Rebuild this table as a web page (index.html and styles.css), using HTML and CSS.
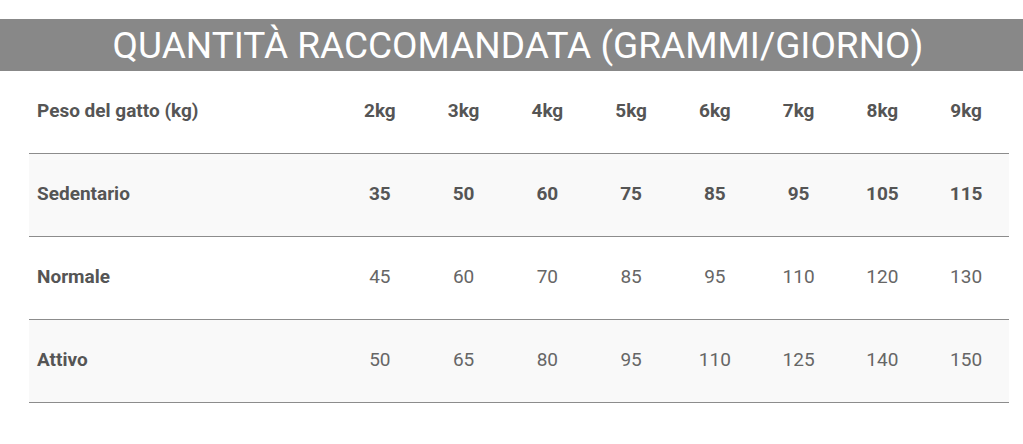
FILE: index.html
```html
<!DOCTYPE html>
<html lang="it">
<head>
<meta charset="utf-8">
<title>Quantità raccomandata</title>
<link rel="stylesheet" href="styles.css">
</head>
<body>
<div class="page">
  <h2 class="title">QUANTITÀ RACCOMANDATA (GRAMMI/GIORNO)</h2>
  <table class="dose">
    <tbody>
      <tr class="row row-head">
        <th class="label">Peso del gatto (kg)</th>
        <td class="num strong">2kg</td><td class="num strong">3kg</td><td class="num strong">4kg</td><td class="num strong">5kg</td>
        <td class="num strong">6kg</td><td class="num strong">7kg</td><td class="num strong">8kg</td><td class="num strong">9kg</td>
      </tr>
      <tr class="row row-alt">
        <th class="label">Sedentario</th>
        <td class="num strong">35</td><td class="num strong">50</td><td class="num strong">60</td><td class="num strong">75</td>
        <td class="num strong">85</td><td class="num strong">95</td><td class="num strong">105</td><td class="num strong">115</td>
      </tr>
      <tr class="row">
        <th class="label">Normale</th>
        <td class="num">45</td><td class="num">60</td><td class="num">70</td><td class="num">85</td>
        <td class="num">95</td><td class="num">110</td><td class="num">120</td><td class="num">130</td>
      </tr>
      <tr class="row row-alt">
        <th class="label">Attivo</th>
        <td class="num">50</td><td class="num">65</td><td class="num">80</td><td class="num">95</td>
        <td class="num">110</td><td class="num">125</td><td class="num">140</td><td class="num">150</td>
      </tr>
    </tbody>
  </table>
</div>
</body>
</html>
```
FILE: styles.css
```css
html, body {
  margin: 0;
  padding: 0;
  background: #ffffff;
}
body {
  font-family: Roboto, "Liberation Sans", Arial, sans-serif;
  color: #555555;
}
.page {
  padding-top: 19px;
}
.title {
  margin: 0;
  height: 52px;
  padding-left: 13px;
  background: #888888;
  color: #ffffff;
  font-weight: 400;
  font-size: 37px;
  line-height: 54px;
  text-align: center;
  letter-spacing: 0;
}
.dose {
  margin: 0 14px 0 29px;
  width: 980px;
  border-collapse: collapse;
  table-layout: fixed;
}
.row {
  height: 83px;
}
.row-head {
  height: 82px;
  background: #ffffff;
}
.row-alt {
  background: #f9f9f9;
}
.label, .num {
  border-bottom: 1px solid #8c8c8c;
  font-size: 19px;
  padding: 0 0 2px;
  vertical-align: middle;
}
.label {
  width: 310px;
  text-align: left;
  padding-left: 8px;
  box-sizing: border-box;
  font-weight: 700;
  color: #555555;
}
.num {
  text-align: center;
  padding-right: 2px;
  font-weight: 400;
  color: #666666;
}
.num.strong {
  font-weight: 700;
  color: #555555;
}
```
